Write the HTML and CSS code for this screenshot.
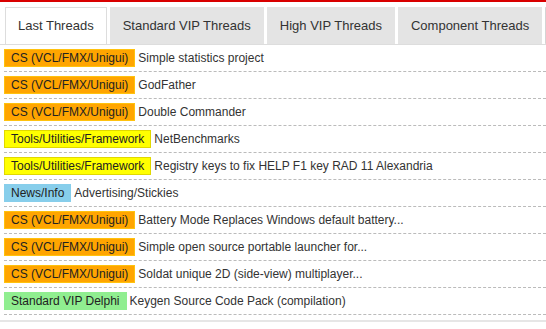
FILE: index.html
```html
<!DOCTYPE html>
<html lang="en">
<head>
    <meta charset="UTF-8">
    <title>Threads</title>
    <link rel="stylesheet" href="styles.css">
</head>
<body>
    <div class="top-bar"></div>

    <ul class="tabs">
        <li class="tab active">Last Threads</li>
        <li class="tab">Standard VIP Threads</li>
        <li class="tab">High VIP Threads</li>
        <li class="tab">Component Threads</li>
        <li class="tab more"></li>
    </ul>

    <div class="thread-list">
        <div class="thread"><span class="label cs">CS (VCL/FMX/Unigui)</span><span class="title">Simple statistics project</span></div>
        <div class="thread"><span class="label cs">CS (VCL/FMX/Unigui)</span><span class="title">GodFather</span></div>
        <div class="thread"><span class="label cs">CS (VCL/FMX/Unigui)</span><span class="title">Double Commander</span></div>
        <div class="thread"><span class="label tools">Tools/Utilities/Framework</span><span class="title">NetBenchmarks</span></div>
        <div class="thread"><span class="label tools">Tools/Utilities/Framework</span><span class="title">Registry keys to fix HELP F1 key RAD 11 Alexandria</span></div>
        <div class="thread"><span class="label news">News/Info</span><span class="title">Advertising/Stickies</span></div>
        <div class="thread"><span class="label cs">CS (VCL/FMX/Unigui)</span><span class="title">Battery Mode Replaces Windows default battery...</span></div>
        <div class="thread"><span class="label cs">CS (VCL/FMX/Unigui)</span><span class="title">Simple open source portable launcher for...</span></div>
        <div class="thread"><span class="label cs">CS (VCL/FMX/Unigui)</span><span class="title">Soldat unique 2D (side-view) multiplayer...</span></div>
        <div class="thread"><span class="label vip">Standard VIP Delphi</span><span class="title">Keygen Source Code Pack (compilation)</span></div>
    </div>
</body>
</html>
```

FILE: styles.css
```css
body {
    font-family: "Liberation Sans", Arial, sans-serif;
    background-color: #fff;
    color: #333;
    margin: 0;
    padding: 0;
    overflow: hidden;
}
.top-bar {
    height: 2px;
    background-color: #d90000;
}
.tabs {
    list-style: none;
    display: flex;
    gap: 3px;
    margin: 5px 0 0 0;
    padding: 0 0 0 5px;
    border-bottom: 1px solid #ddd;
    white-space: nowrap;
    overflow: hidden;
}
.tab {
    flex: none;
    font-size: 13px;
    line-height: 35px;
    padding: 0 12px;
    border: 1px solid #e4e4e4;
    background-color: #e4e4e4;
    color: #333;
}
.tab.active {
    background-color: #fff;
    border-color: #ddd;
    border-bottom-color: #fff;
    margin-bottom: -1px;
    line-height: 36px;
}
.tab.more {
    width: 80px;
    border-left-color: #d4d4d4;
}
.thread-list {
    padding: 0 0 5px 4px;
    border-bottom: 2px solid #e6e6e6;
}
.thread {
    display: flex;
    align-items: center;
    gap: 3px;
    padding: 4px 0;
    border-bottom: 1px dashed #bbb;
    font-size: 12px;
    white-space: nowrap;
}
.label {
    line-height: 16px;
    padding: 0 6px;
    border: 1px solid transparent;
    color: #222;
}
.label.cs {
    background-color: #ffa500;
    border-color: #ffc20e;
}
.label.tools {
    background-color: #ffff00;
    border-color: #e0d800;
}
.label.news {
    background-color: #87ceeb;
    border-color: #87ceeb;
}
.label.vip {
    background-color: #90ee90;
    border-color: #90ee90;
}
.title {
    color: #333;
}
```
